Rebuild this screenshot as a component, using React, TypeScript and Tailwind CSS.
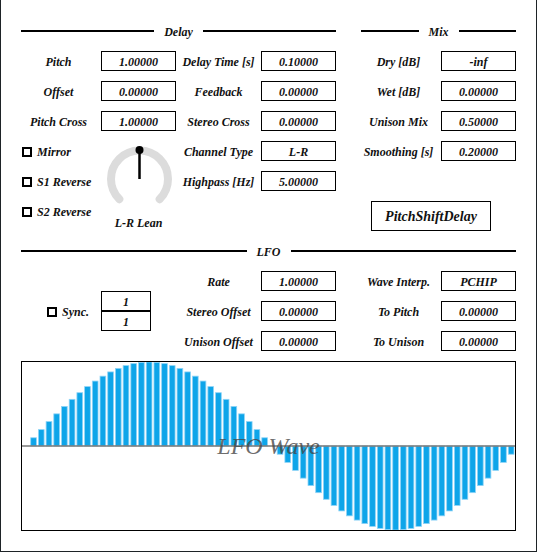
import React from "react";

function Header({ title }: { title: string }) {
  return (
    <div className="flex items-center h-[20px] gap-[10px]">
      <div className="flex-1 h-[2px] bg-black" />
      <span className="leading-none pt-[1px]">{title}</span>
      <div className="flex-1 h-[2px] bg-black" />
    </div>
  );
}

function Label({ text }: { text: string }) {
  return (
    <div className="h-[20px] pt-[1px] flex items-center justify-center leading-none whitespace-nowrap">
      {text}
    </div>
  );
}

function Val({ text }: { text: string }) {
  return (
    <div className="h-[20px] pt-[1px] border border-black flex items-center justify-center leading-none">
      {text}
    </div>
  );
}

function Pairs({ items }: { items: [string, string][] }) {
  return (
    <>
      {items.map(([l, v], i) => (
        <React.Fragment key={i}>
          <Label text={l} />
          <Val text={v} />
        </React.Fragment>
      ))}
    </>
  );
}

function Check({ text }: { text: string }) {
  return (
    <div className="h-[20px] flex items-center gap-[5px] pl-[1px] leading-none whitespace-nowrap">
      <div className="w-[10px] h-[10px] mt-[1px] border-2 border-black" />
      <span className="pt-[1px]">{text}</span>
    </div>
  );
}

function Knob() {
  const cx = 38.5;
  const cy = 38;
  const r = 28.5;
  const d = r * Math.SQRT1_2;
  return (
    <div className="w-[75px] flex flex-col items-center">
      <svg width={75} height={74} viewBox="0 0 75 74">
        <path
          d={`M ${cx - d} ${cy + d} A ${r} ${r} 0 1 1 ${cx + d} ${cy + d}`}
          fill="none"
          stroke="#dcdcdc"
          strokeWidth={8}
          strokeLinecap="round"
        />
        <line x1={cx} y1={cy} x2={cx} y2={cy - 29} stroke="#000" strokeWidth={2.5} />
        <circle cx={cx} cy={cy - 29} r={4} fill="#000" />
      </svg>
      <div className="leading-[14px] pt-[1px] whitespace-nowrap">L-R Lean</div>
    </div>
  );
}

function Wave() {
  const W = 493;
  const H = 168;
  const mid = 84;
  const N = 64;
  const step = W / N;
  const bars = [];
  for (let i = 0; i < N; i++) {
    const v = Math.sin((2 * Math.PI * i) / N) * mid;
    if (Math.abs(v) < 0.5) continue;
    const x = i * step + 1;
    const w = step - 2;
    bars.push(
      <rect
        key={i}
        x={x}
        y={v > 0 ? mid - v : mid}
        width={w}
        height={Math.abs(v)}
        fill="#0ea5e9"
        stroke="#8fd4f7"
        strokeWidth={0.8}
      />
    );
  }
  return (
    <svg width={W} height={H} viewBox={`0 0 ${W} ${H}`} className="block">
      {bars}
      <line x1={0} y1={mid} x2={W} y2={mid} stroke="#777" strokeWidth={1.5} />
    </svg>
  );
}

export default function App() {
  return (
    <div className="w-[537px] h-[552px] bg-white border-x border-b border-[#1e2327] pl-[20px] pt-[21px] font-['Liberation_Serif',serif] italic font-bold text-[12px] text-[#111] flex flex-col">
      {/* Top section */}
      <div className="flex h-[220px] gap-[25px]">
        {/* Delay */}
        <div className="w-[315px] flex flex-col gap-[10px]">
          <Header title="Delay" />
          <div className="grid grid-cols-[75px_75px_75px_75px] gap-x-[5px] gap-y-[10px]">
            <Pairs
              items={[
                ["Pitch", "1.00000"],
                ["Delay Time [s]", "0.10000"],
                ["Offset", "0.00000"],
                ["Feedback", "0.00000"],
                ["Pitch Cross", "1.00000"],
                ["Stereo Cross", "0.00000"],
              ]}
            />
          </div>
          <div className="flex gap-[5px]">
            <div className="w-[75px] flex flex-col gap-[10px]">
              <Check text="Mirror" />
              <Check text="S1 Reverse" />
              <Check text="S2 Reverse" />
            </div>
            <Knob />
            <div className="grid grid-cols-[75px_75px] gap-x-[5px] gap-y-[10px] content-start">
              <Pairs
                items={[
                  ["Channel Type", "L-R"],
                  ["Highpass [Hz]", "5.00000"],
                ]}
              />
            </div>
          </div>
        </div>
        {/* Mix */}
        <div className="w-[155px] flex flex-col gap-[10px]">
          <Header title="Mix" />
          <div className="grid grid-cols-[75px_75px] gap-x-[5px] gap-y-[10px]">
            <Pairs
              items={[
                ["Dry [dB]", "-inf"],
                ["Wet [dB]", "0.00000"],
                ["Unison Mix", "0.50000"],
                ["Smoothing [s]", "0.20000"],
              ]}
            />
          </div>
          <div className="mt-[30px] ml-[10px] w-[120px] h-[30px] pt-[1px] border border-black flex items-center justify-center text-[14px] leading-none">
            PitchShiftDelay
          </div>
        </div>
      </div>

      {/* LFO */}
      <div className="w-[495px]">
        <Header title="LFO" />
      </div>
      <div className="mt-[10px] h-[80px] flex">
        <div className="w-[155px] flex items-center gap-[5px]">
          <div className="w-[75px] flex justify-end pr-[7px]">
            <Check text="Sync." />
          </div>
          <div className="w-[50px] h-[40px] border border-black flex flex-col">
            <div className="flex-1 pt-[1px] flex items-center justify-center leading-none">1</div>
            <div className="h-[2px] bg-black" />
            <div className="flex-1 pt-[1px] flex items-center justify-center leading-none">1</div>
          </div>
        </div>
        <div className="ml-[5px] grid grid-cols-[75px_75px] gap-x-[5px] gap-y-[10px] content-start">
          <Pairs
            items={[
              ["Rate", "1.00000"],
              ["Stereo Offset", "0.00000"],
              ["Unison Offset", "0.00000"],
            ]}
          />
        </div>
        <div className="ml-[25px] grid grid-cols-[75px_75px] gap-x-[5px] gap-y-[10px] content-start">
          <Pairs
            items={[
              ["Wave Interp.", "PCHIP"],
              ["To Pitch", "0.00000"],
              ["To Unison", "0.00000"],
            ]}
          />
        </div>
      </div>

      <div className="mt-[10px] w-[495px] h-[170px] border border-black relative">
        <Wave />
        <div className="absolute inset-0 flex items-center justify-center pointer-events-none">
          <span className="font-normal text-[24px] leading-none text-[rgba(70,70,70,0.8)]">
            LFO Wave
          </span>
        </div>
      </div>
    </div>
  );
}
